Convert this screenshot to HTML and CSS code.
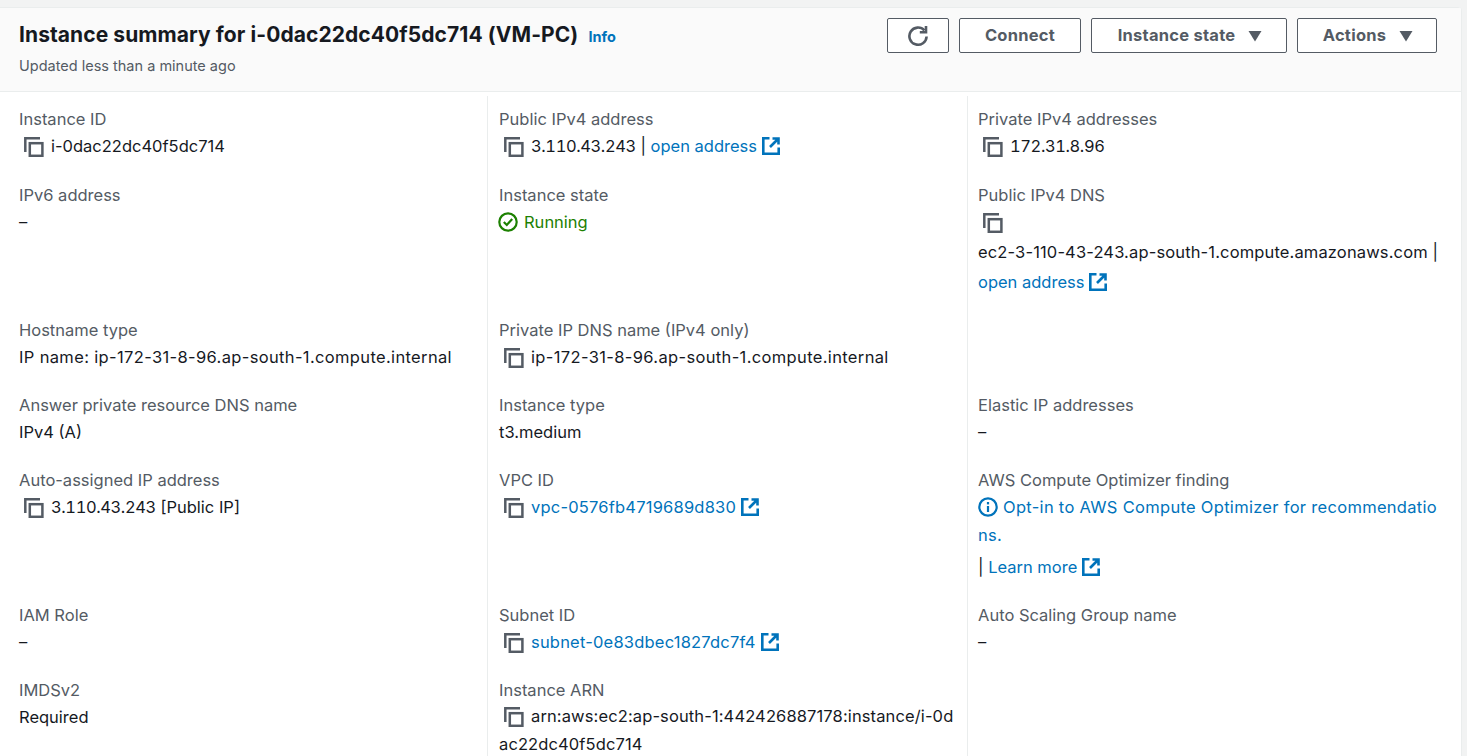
FILE: index.html
```html
<!DOCTYPE html>
<html lang="en">

<head>
  <meta charset="UTF-8">
  <meta name="viewport" content="width=device-width, initial-scale=1.0">
  <title>Instance summary</title>
  <link rel="stylesheet" href="styles.css">
</head>

<body>

  <svg class="icon-defs" width="0" height="0" aria-hidden="true">
    <symbol id="copy" viewBox="0 0 20 20">
      <path d="M1.3 15V1.3H16" fill="none" stroke="currentColor" stroke-width="2.5" />
      <rect x="5.8" y="6.2" width="12.6" height="12.6" fill="none" stroke="currentColor" stroke-width="2.5" />
    </symbol>
    <symbol id="external" viewBox="0 0 18 18">
      <path d="M7.5 1.3H1.3v15.4h15.4V10.5" fill="none" stroke="currentColor" stroke-width="2.6" />
      <path d="M10.5 1.5h6v6M16 2L8 10" fill="none" stroke="currentColor" stroke-width="2.6" />
    </symbol>
    <symbol id="caret" viewBox="0 0 14 12">
      <path d="M0.5 1h13L7 11.5z" fill="currentColor" />
    </symbol>
  </svg>

  <main class="panel">
    <header class="panel-header">
      <div>
        <h1>Instance summary for i-0dac22dc40f5dc714 (VM-PC) <a class="info" href="#">Info</a></h1>
        <p class="updated">Updated less than a minute ago</p>
      </div>
      <div class="actions">
        <button type="button" class="btn btn-refresh" aria-label="Refresh">
          <svg width="22" height="22" viewBox="0 0 22 22" fill="none" stroke="currentColor" stroke-width="2.6">
            <path d="M17.4 5.4A8.6 8.6 0 1 0 19.6 11.5" />
            <path d="M19 1v6.2h-6.2" />
          </svg>
        </button>
        <button type="button" class="btn btn-connect">Connect</button>
        <button type="button" class="btn btn-state">Instance state <svg class="caret"><use href="#caret" /></svg></button>
        <button type="button" class="btn btn-menu">Actions <svg class="caret"><use href="#caret" /></svg></button>
      </div>
    </header>

    <section class="details">

      <div class="cell">
        <div class="label">Instance ID</div>
        <div class="value"><svg class="copy"><use href="#copy" /></svg>i-0dac22dc40f5dc714</div>
      </div>
      <div class="cell">
        <div class="label">Public IPv4 address</div>
        <div class="value"><svg class="copy"><use href="#copy" /></svg><span class="ip">3.110.43.243</span> | <a href="#">open address<svg class="ext"><use href="#external" /></svg></a></div>
      </div>
      <div class="cell">
        <div class="label">Private IPv4 addresses</div>
        <div class="value"><svg class="copy"><use href="#copy" /></svg><span class="ip">172.31.8.96</span></div>
      </div>

      <div class="cell">
        <div class="label">IPv6 address</div>
        <div class="value">–</div>
      </div>
      <div class="cell">
        <div class="label">Instance state</div>
        <div class="value running">
          <svg class="status" viewBox="0 0 20 20" fill="none" stroke="currentColor" stroke-width="2.2">
            <circle cx="10" cy="10" r="8.7" />
            <path d="M5.8 10l3 3 5.4-6" />
          </svg>Running
        </div>
      </div>
      <div class="cell">
        <div class="label">Public IPv4 DNS</div>
        <div class="value"><svg class="copy"><use href="#copy" /></svg></div>
        <div class="value fqdn">ec2-3-110-43-243.ap-south-1.compute.amazonaws.com |</div>
        <div class="value"><a href="#">open address<svg class="ext"><use href="#external" /></svg></a></div>
      </div>

      <div class="cell">
        <div class="label">Hostname type</div>
        <div class="value dns-name">IP name: ip-172-31-8-96.ap-south-1.compute.internal</div>
      </div>
      <div class="cell">
        <div class="label">Private IP DNS name (IPv4 only)</div>
        <div class="value dns-name"><svg class="copy"><use href="#copy" /></svg>ip-172-31-8-96.ap-south-1.compute.internal</div>
      </div>
      <div class="cell"></div>

      <div class="cell">
        <div class="label">Answer private resource DNS name</div>
        <div class="value">IPv4 (A)</div>
      </div>
      <div class="cell">
        <div class="label">Instance type</div>
        <div class="value">t3.medium</div>
      </div>
      <div class="cell">
        <div class="label">Elastic IP addresses</div>
        <div class="value">–</div>
      </div>

      <div class="cell">
        <div class="label">Auto-assigned IP address</div>
        <div class="value"><svg class="copy"><use href="#copy" /></svg><span class="ip">3.110.43.243</span> [Public IP]</div>
      </div>
      <div class="cell">
        <div class="label">VPC ID</div>
        <div class="value res-id"><svg class="copy"><use href="#copy" /></svg><a href="#">vpc-0576fb4719689d830<svg class="ext"><use href="#external" /></svg></a></div>
      </div>
      <div class="cell">
        <div class="label">AWS Compute Optimizer finding</div>
        <div class="optin">
          <a href="#"><svg class="status info-icon" viewBox="0 0 20 20" fill="none" stroke="currentColor" stroke-width="2.2">
            <circle cx="10" cy="10" r="8.7" />
            <path d="M10 9v6" />
            <path d="M10 5v2.4" />
          </svg>Opt-in to AWS Compute Optimizer for recommendatio<br>ns.</a>
        </div>
        <div class="value">| <a href="#">Learn more<svg class="ext"><use href="#external" /></svg></a></div>
      </div>

      <div class="cell">
        <div class="label">IAM Role</div>
        <div class="value">–</div>
      </div>
      <div class="cell">
        <div class="label">Subnet ID</div>
        <div class="value res-id"><svg class="copy"><use href="#copy" /></svg><a href="#">subnet-0e83dbec1827dc7f4<svg class="ext"><use href="#external" /></svg></a></div>
      </div>
      <div class="cell">
        <div class="label">Auto Scaling Group name</div>
        <div class="value">–</div>
      </div>

      <div class="cell">
        <div class="label">IMDSv2</div>
        <div class="value">Required</div>
      </div>
      <div class="cell">
        <div class="label">Instance ARN</div>
        <div class="value arn"><svg class="copy"><use href="#copy" /></svg>arn:aws:ec2:ap-south-1:442426887178:instance/i-0d<br>ac22dc40f5dc714</div>
      </div>
      <div class="cell"></div>

    </section>
  </main>

</body>

</html>
```

FILE: styles.css
```css
html,
body {
  height: 100%;
  margin: 0;
  overflow: hidden;
}

body {
  font-family: Inter, "Noto Sans", Arial, sans-serif;
  font-size: 16.5px;
  color: #16191f;
  background-color: #f2f3f3;
  padding-top: 7px;
  box-sizing: border-box;
}

a {
  color: #0073bb;
  text-decoration: none;
}

.icon-defs {
  position: absolute;
}

.panel {
  width: 1462px;
  height: 749px;
  box-sizing: border-box;
  background-color: white;
  border-right: 1px solid #eaeded;
  border-radius: 0 4px 0 0;
  overflow: hidden;
}

.panel-header {
  display: flex;
  justify-content: space-between;
  height: 85px;
  box-sizing: border-box;
  padding: 10px 24px 0 19px;
  background-color: #fafafa;
  border-top: 1px solid #eaeded;
  border-bottom: 1px solid #eaeded;
}

h1 {
  margin: 1px 0 0;
  font-size: 21px;
  line-height: 32px;
  font-weight: 700;
  letter-spacing: 0.08px;
  white-space: nowrap;
}

.info {
  margin-left: 5px;
  font-size: 14.5px;
  letter-spacing: 0;
}

.updated {
  margin: 2px 0 0;
  font-size: 14.5px;
  line-height: 22px;
  color: #545b64;
}

.actions {
  display: flex;
  gap: 10px;
}

.btn {
  display: flex;
  align-items: center;
  justify-content: center;
  gap: 13px;
  height: 35px;
  padding: 0 0 2px;
  font-family: inherit;
  font-size: 16.5px;
  font-weight: 700;
  letter-spacing: 0.25px;
  color: #545b64;
  background-color: white;
  border: 1px solid #545b64;
  border-radius: 2px;
}

.btn-refresh {
  width: 62px;
  padding: 0;
}

.btn-connect {
  width: 122px;
}

.btn-state {
  width: 196px;
  padding-left: 2px;
}

.btn-menu {
  width: 140px;
  padding-left: 2px;
}

.caret {
  width: 14px;
  height: 12px;
  margin-top: 2px;
}

.details {
  display: grid;
  grid-template-columns: 487px 480px 1fr;
  margin-top: 4px;
}

.cell {
  padding: 13px 12px 9px 11px;
  border-left: 1px solid #eaeded;
}

.cell:nth-child(-n+3) {
  padding-top: 12px;
  padding-bottom: 10px;
}

.cell:nth-child(3n+1) {
  padding-left: 19px;
  border-left: none;
}

.cell:nth-child(3n) {
  padding-left: 10px;
}

.label {
  line-height: 22px;
  margin-bottom: 1px;
  color: #545b64;
}

.value {
  line-height: 30px;
  min-height: 30px;
  white-space: nowrap;
}

/* digits in the addresses run wider than the default figures */
.ip {
  font-variant-numeric: tabular-nums;
  letter-spacing: -0.4px;
}

.dns-name {
  letter-spacing: 0.35px;
}

.res-id {
  letter-spacing: 0.2px;
}

.fqdn {
  letter-spacing: 0.14px;
}

.arn {
  line-height: 28px;
  letter-spacing: 0.12px;
}

.copy {
  width: 20px;
  height: 20px;
  margin: 0 7px 0 5px;
  vertical-align: -5px;
  color: #545b64;
}

.ext {
  width: 18px;
  height: 18px;
  margin-left: 5px;
  vertical-align: -3px;
}

.running {
  color: #1d8102;
}

.status {
  width: 20px;
  height: 20px;
  margin: 0 6px 0 -1px;
  vertical-align: -4px;
}

.info-icon {
  margin: 0 5px 0 0;
}

.optin {
  padding-top: 1px;
  margin-bottom: 3px;
  line-height: 28px;
  letter-spacing: 0.3px;
  white-space: nowrap;
}
```
